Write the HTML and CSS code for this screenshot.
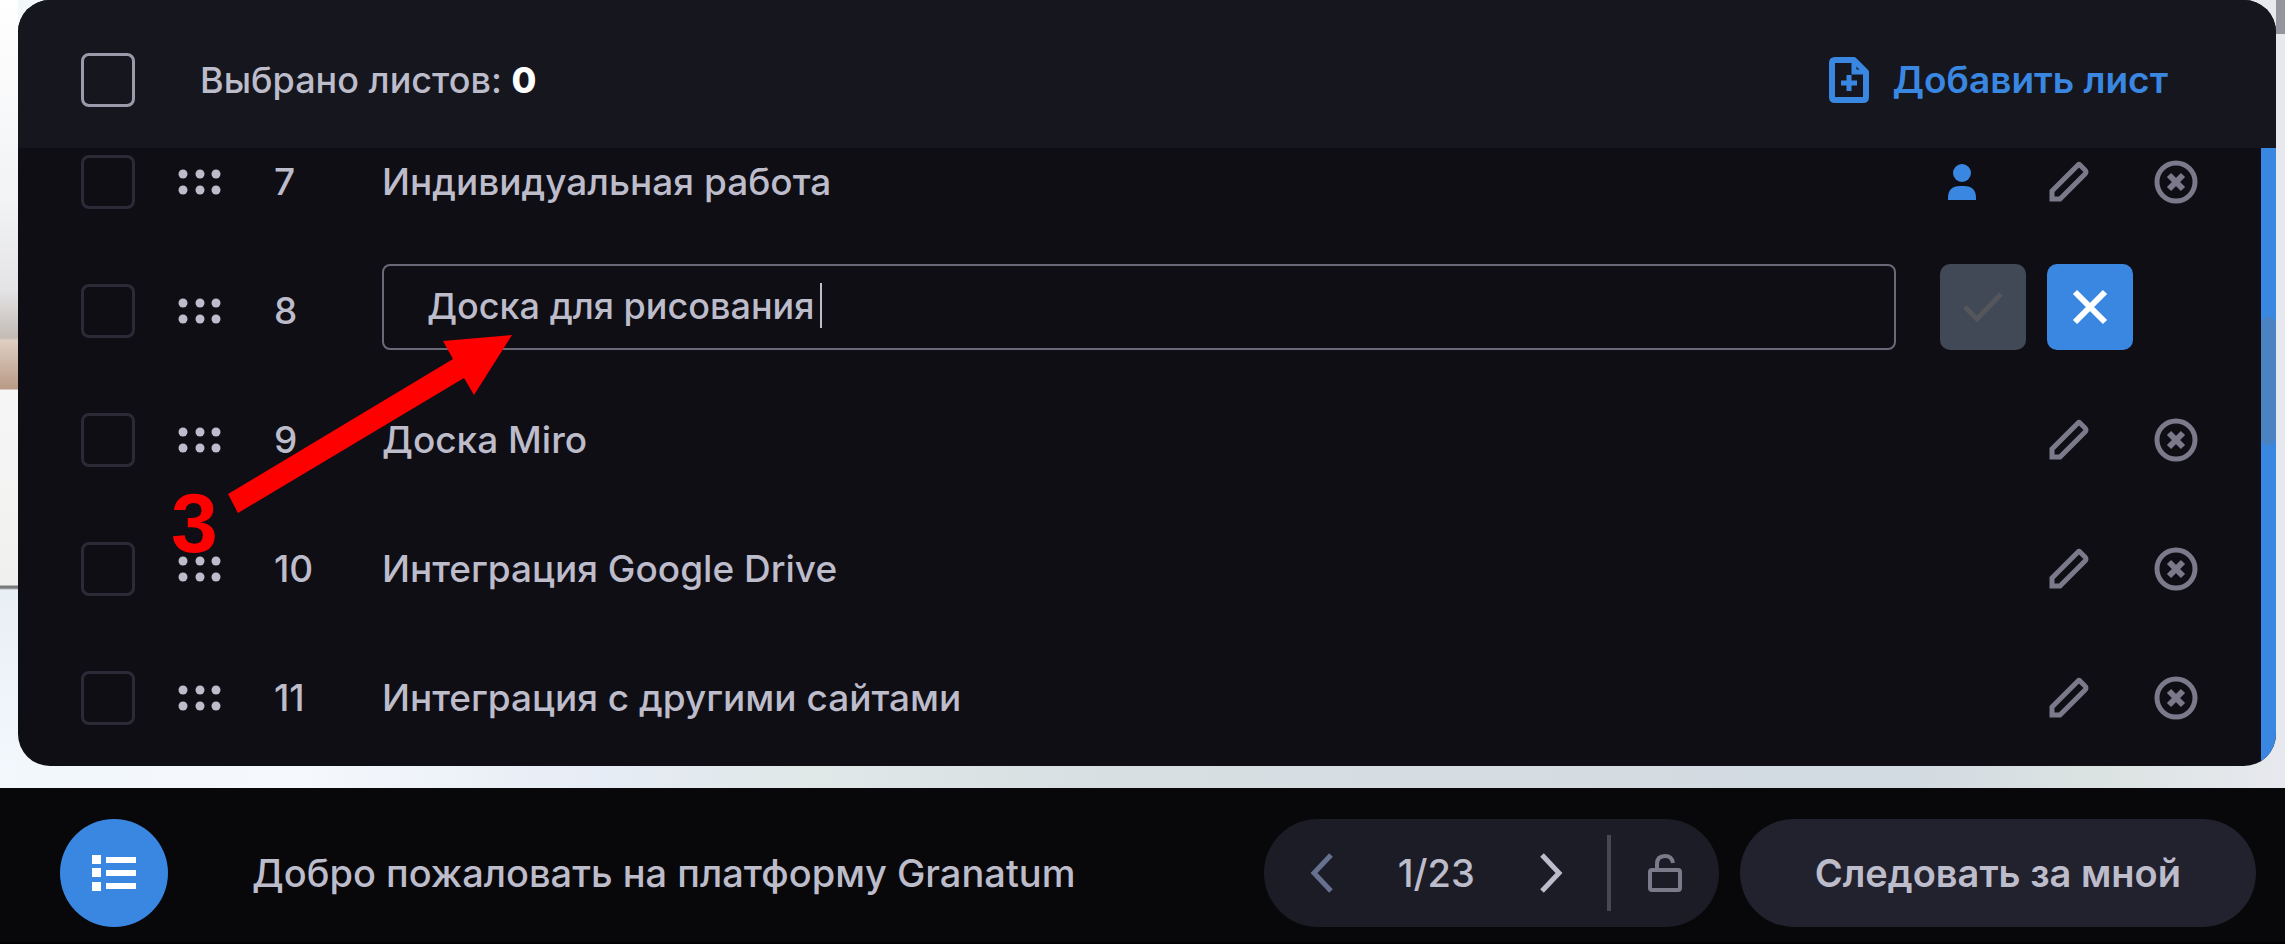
FILE: index.html
```
<!DOCTYPE html>
<html lang="ru">
<head>
<meta charset="utf-8">
<title>Granatum</title>
<link rel="stylesheet" href="styles.css">
</head>
<body>
<svg class="sprite" aria-hidden="true">
	<symbol id="dots" viewBox="0 0 44 28">
		<g fill="#bdbccb"><circle cx="5" cy="6" r="4.5"/><circle cx="22" cy="6" r="4.5"/><circle cx="38" cy="6" r="4.5"/><circle cx="5" cy="22" r="4.5"/><circle cx="22" cy="22" r="4.5"/><circle cx="38" cy="22" r="4.5"/></g>
	</symbol>
	<symbol id="pencil" viewBox="0 0 42 42">
		<path d="M3 38V30L29 4Q30 3 31 4L36 9Q38 11 36 13L11 38Z" fill="none" stroke="#7b7a8b" stroke-width="5"/>
	</symbol>
	<symbol id="remove" viewBox="0 0 44 44">
		<circle cx="22" cy="22" r="19" fill="none" stroke="#7b7a8b" stroke-width="5"/>
		<path d="M15 15L29 29M29 15L15 29" stroke="#7b7a8b" stroke-width="6"/>
	</symbol>
</svg>
<main class="stage">
	<section class="panel">
		<header class="panel-head">
			<input type="checkbox" class="check check-all" id="all">
			<label class="selected" for="all">Выбрано листов: <b>0</b></label>
			<button class="add" type="button">
				<svg width="40" height="46" viewBox="0 0 40 46"><path d="M6 3H25L37 15V40Q37 43 34 43H6Q3 43 3 40V6Q3 3 6 3Z" fill="none" stroke="#3a87e2" stroke-width="6" stroke-linejoin="round"/><path d="M25 3V15H37" fill="none" stroke="#3a87e2" stroke-width="5"/><path d="M20 18V34M12 26H28" stroke="#3a87e2" stroke-width="5"/></svg>
				Добавить лист
			</button>
		</header>
		<div class="panel-body">
			<ul class="list">
				<li class="row">
					<input type="checkbox" class="check" aria-label="7">
					<svg class="dots"><use href="#dots"/></svg>
					<span class="num">7</span>
					<span class="name">Индивидуальная работа</span>
					<svg class="user" viewBox="0 0 28 36"><circle cx="14" cy="9" r="9" fill="#3a87e2"/><path d="M0 36V34Q0 22 12 22H16Q28 22 28 34V36Z" fill="#3a87e2"/></svg>
					<button class="icon" type="button" aria-label="Изменить"><svg width="42" height="42"><use href="#pencil"/></svg></button>
					<button class="icon" type="button" aria-label="Удалить"><svg width="44" height="44"><use href="#remove"/></svg></button>
				</li>
				<li class="row">
					<input type="checkbox" class="check" aria-label="8">
					<svg class="dots"><use href="#dots"/></svg>
					<span class="num">8</span>
					<form class="edit">
						<div class="field-box">
							<input class="field" type="text" value="Доска для рисования" aria-label="Название листа">
							<i class="caret"></i>
						</div>
						<button class="btn btn-off" type="button" aria-label="Сохранить" disabled><svg width="42" height="42" viewBox="0 0 42 42"><path d="M3 21L15 33L39 8" fill="none" stroke="#55565c" stroke-width="5"/></svg></button>
						<button class="btn" type="button" aria-label="Отмена"><svg width="42" height="42" viewBox="0 0 42 42"><path d="M6 6L36 36M36 6L6 36" stroke="#fff" stroke-width="6"/></svg></button>
					</form>
				</li>
				<li class="row">
					<input type="checkbox" class="check" aria-label="9">
					<svg class="dots"><use href="#dots"/></svg>
					<span class="num">9</span>
					<span class="name">Доска Miro</span>
					<button class="icon" type="button" aria-label="Изменить"><svg width="42" height="42"><use href="#pencil"/></svg></button>
					<button class="icon" type="button" aria-label="Удалить"><svg width="44" height="44"><use href="#remove"/></svg></button>
				</li>
				<li class="row">
					<input type="checkbox" class="check" aria-label="10">
					<svg class="dots"><use href="#dots"/></svg>
					<span class="num">10</span>
					<span class="name">Интеграция Google Drive</span>
					<button class="icon" type="button" aria-label="Изменить"><svg width="42" height="42"><use href="#pencil"/></svg></button>
					<button class="icon" type="button" aria-label="Удалить"><svg width="44" height="44"><use href="#remove"/></svg></button>
				</li>
				<li class="row">
					<input type="checkbox" class="check" aria-label="11">
					<svg class="dots"><use href="#dots"/></svg>
					<span class="num">11</span>
					<span class="name">Интеграция с другими сайтами</span>
					<button class="icon" type="button" aria-label="Изменить"><svg width="42" height="42"><use href="#pencil"/></svg></button>
					<button class="icon" type="button" aria-label="Удалить"><svg width="44" height="44"><use href="#remove"/></svg></button>
				</li>
			</ul>
			<div class="scroll"><div class="thumb"></div></div>
		</div>
		<div class="mark">
			<svg width="284" height="178" viewBox="0 0 284 178"><path d="M0 159L225 24L215 6L284 0L246 60L236 43L10 178Z" fill="#f00"/></svg>
			<b>3</b>
		</div>
	</section>
	<div class="page-scroll"></div>
</main>
<footer class="bar">
	<button class="menu" type="button" aria-label="Список листов">
		<svg width="44" height="36" viewBox="0 0 44 36" fill="#fff"><path d="M0 0H9V9H0ZM14 2H44V8H14ZM0 13H9V22H0ZM14 15H44V21H14ZM0 27H9V36H0ZM14 28H44V34H14Z"/></svg>
	</button>
	<h1 class="title">Добро пожаловать на платформу Granatum</h1>
	<nav class="pager">
		<button class="icon" type="button" aria-label="Назад"><svg width="24" height="40" viewBox="0 0 24 40"><path d="M21 2L4 20L21 38" fill="none" stroke="#66708f" stroke-width="5"/></svg></button>
		<span class="pages">1/23</span>
		<button class="icon" type="button" aria-label="Вперёд"><svg width="24" height="40" viewBox="0 0 24 40"><path d="M3 2L20 20L3 38" fill="none" stroke="#bdbccb" stroke-width="5"/></svg></button>
		<i class="sep"></i>
		<button class="icon" type="button" aria-label="Блокировка"><svg width="36" height="40" viewBox="0 0 36 40" fill="none" stroke="#7b7a8b" stroke-width="4"><rect x="3" y="17" width="30" height="20" rx="2"/><path d="M10 17V11Q10 3 18 3Q25 3 26 10"/></svg></button>
	</nav>
	<button class="follow" type="button">Следовать за мной</button>
</footer>
</body>
</html>
```
FILE: styles.css
```
*{margin:0;padding:0;box-sizing:border-box;}
html,body{height:100%;}
body{display:flex;flex-direction:column;background:#08080a;color:#bdbccb;font:500 37px/48px Inter,"Noto Sans",sans-serif;overflow:hidden;}
button,input{font:inherit;color:inherit;border:0;background:none;}
button{display:flex;align-items:center;justify-content:center;}
svg{display:block;flex:none;}
ul{list-style:none;}
.sprite{position:absolute;width:0;height:0;}

.stage{flex:1;min-height:0;display:flex;padding-bottom:22px;background:linear-gradient(#fff 0,#f2f3f5 200px,#e4e4e6 290px,#c3bbb4 338px,#dfcfc3 340px,#b99a86 389px,#f6f6f6 390px,#f0f0ef 585px,#77797a 586px,#77797a 588px,#e8eff5 590px,#f2f8fc 766px) no-repeat 0 0/18px 100%,linear-gradient(90deg,#f2f7fb,#f5f8fc 300px,#e6ecf5 600px,#e0e8e8 800px,#d8dfe2 1100px,#d2dae2 1900px,#dbe3e2 2100px,#e8e9ee);}
.panel{flex:1;position:relative;display:flex;flex-direction:column;margin-left:18px;border-radius:32px;background:#0f0e14;overflow:hidden;}
.page-scroll{width:9px;margin-bottom:-22px;background:linear-gradient(#95959d 34px,#e8e9ee 34px);}

.panel-head{flex:none;height:148px;display:flex;align-items:center;padding:12px 108px 0 63px;background:#16161e;}
.check{appearance:none;flex:none;width:54px;height:54px;border:3px solid #2b2a36;border-radius:8px;}
.check-all{border-color:#9b9aaa;}
.selected{margin-left:65px;font-size:36px;}
.selected b{color:#fff;font-weight:800;}
.add{margin-left:auto;gap:24px;color:#3a87e2;font-weight:600;}

.panel-body{flex:1;display:flex;}
.list{flex:1;padding-top:7px;}
.row{height:54px;display:flex;align-items:center;padding:0 63px;}
.row + .row{margin-top:75px;}
.dots{width:44px;height:28px;margin-left:43px;}
.num{width:108px;margin-left:52px;}
.name{flex:1;}
.user{width:28px;height:36px;margin-right:10px;}
.icon{width:44px;}
.row .icon{margin-left:62px;}
.edit{flex:1;display:flex;margin-right:65px;padding-bottom:8px;}
.field-box{flex:1;position:relative;margin-right:44px;}
.field{width:100%;height:86px;padding:0 43px 2px;border:2px solid #6a6978;border-radius:8px;outline:0;font-size:36px;}
.caret{position:absolute;left:438px;top:19px;width:2px;height:45px;background:#bdbccb;}
.btn{width:86px;height:86px;border-radius:10px;background:#3a87e2;}
.btn-off{background:#414957;margin-right:21px;}
.scroll{width:15px;padding-top:169px;background:#3a87e2;}
.thumb{height:128px;border-radius:8px;background:#4b82c2;}

/* стрелка с номером шага поверх списка */
.mark{position:absolute;left:153px;top:335px;color:#f00;font:bold 84px/84px "Liberation Sans",Arial,sans-serif;}
.mark svg{margin-left:57px;}
.mark b{position:absolute;left:0;top:146px;}

.bar{height:156px;display:flex;align-items:center;padding:16px 29px 0 60px;border-bottom:2px solid #000;font-size:38px;}
.menu{width:108px;height:108px;border-radius:50%;background:#3a87e2;}
.title{flex:1;margin-left:84px;font-size:38px;font-weight:500;}
.pager{height:108px;display:flex;align-items:center;padding:0 32px 0 36px;border-radius:54px;background:#1c1c26;}
.pages{margin:0 54px;}
.sep{width:4px;height:76px;margin:0 32px 0 34px;background:#484855;}
.follow{height:108px;margin-left:21px;padding:0 75px;border-radius:54px;background:#22222e;font-weight:600;}
```
